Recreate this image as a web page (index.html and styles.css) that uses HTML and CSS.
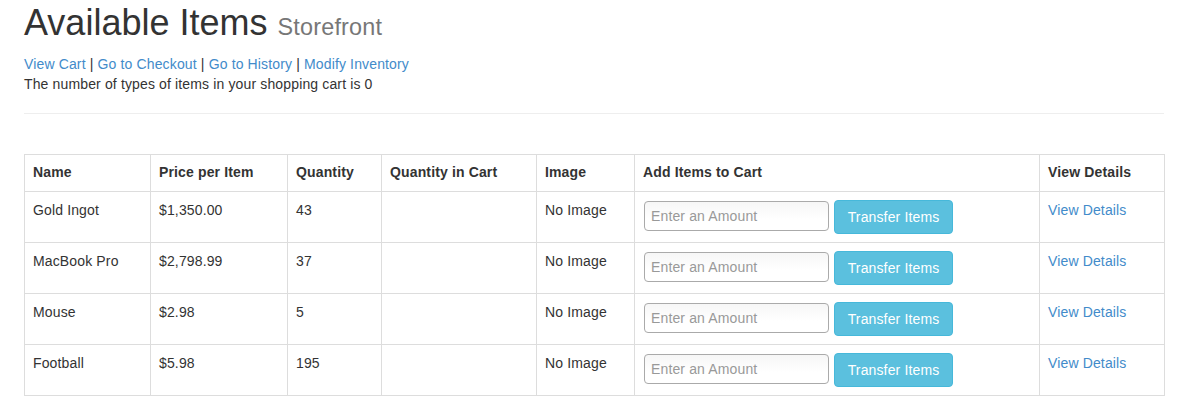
FILE: index.html
```html
<!DOCTYPE html>
<html>
<head>
<meta charset="utf-8">
<title>Available Items</title>
<link rel="stylesheet" href="styles.css">
</head>
<body>
<div class="page">
  <h1 class="title">Available Items <small class="subtitle">Storefront</small></h1>
  <div class="nav">
    <a href="#">View Cart</a> | <a href="#">Go to Checkout</a> | <a href="#">Go to History</a> | <a href="#">Modify Inventory</a>
  </div>
  <div class="count">The number of types of items in your shopping cart is 0</div>
  <hr class="divider">
  <table class="items">
    <colgroup>
      <col class="c-name"><col class="c-price"><col class="c-qty"><col class="c-cart"><col class="c-img"><col class="c-add"><col class="c-view">
    </colgroup>
    <thead>
      <tr><th>Name</th><th>Price per Item</th><th>Quantity</th><th>Quantity in Cart</th><th>Image</th><th>Add Items to Cart</th><th>View Details</th></tr>
    </thead>
    <tbody>
      <tr><td>Gold Ingot</td><td>$1,350.00</td><td>43</td><td></td><td>No Image</td>
        <td><div class="add"><input class="amount" type="text" placeholder="Enter an Amount"><button class="transfer">Transfer Items</button></div></td>
        <td><a href="#">View Details</a></td></tr>
      <tr><td>MacBook Pro</td><td>$2,798.99</td><td>37</td><td></td><td>No Image</td>
        <td><div class="add"><input class="amount" type="text" placeholder="Enter an Amount"><button class="transfer">Transfer Items</button></div></td>
        <td><a href="#">View Details</a></td></tr>
      <tr><td>Mouse</td><td>$2.98</td><td>5</td><td></td><td>No Image</td>
        <td><div class="add"><input class="amount" type="text" placeholder="Enter an Amount"><button class="transfer">Transfer Items</button></div></td>
        <td><a href="#">View Details</a></td></tr>
      <tr><td>Football</td><td>$5.98</td><td>195</td><td></td><td>No Image</td>
        <td><div class="add"><input class="amount" type="text" placeholder="Enter an Amount"><button class="transfer">Transfer Items</button></div></td>
        <td><a href="#">View Details</a></td></tr>
    </tbody>
  </table>
</div>
</body>
</html>
```

FILE: styles.css
```css
html, body {
  margin: 0;
  padding: 0;
  background: #fff;
}
body {
  font-family: "Liberation Sans", Arial, sans-serif;
  font-size: 14px;
  line-height: 20px;
  letter-spacing: 0.14px;
  color: #333;
}
a {
  color: #428bca;
  text-decoration: none;
}
.page {
  width: 1140px;
  margin-left: 24px;
}
.title {
  font-size: 36px;
  font-weight: 500;
  line-height: 1.1;
  letter-spacing: 0;
  margin: 3px 0 11px;
  color: #333;
}
.subtitle {
  font-size: 65%;
  font-weight: normal;
  line-height: 1;
  letter-spacing: 0.2px;
  color: #777;
}
.nav, .count {
  line-height: 20px;
}
.divider {
  border: 0;
  border-top: 1px solid #eee;
  margin: 19px 0 40px;
  height: 0;
}
.items {
  width: 1140px;
  table-layout: fixed;
  border-collapse: collapse;
  border: 1px solid #ddd;
}
.c-name { width: 126px; }
.c-price { width: 137px; }
.c-qty { width: 94px; }
.c-cart { width: 155px; }
.c-img { width: 98px; }
.c-add { width: 405px; }
.c-view { width: 125px; }
.items th, .items td {
  border: 1px solid #ddd;
  padding: 8px;
  text-align: left;
  vertical-align: top;
  line-height: 20px;
}
.items th {
  font-weight: bold;
  padding-top: 7px;
  padding-bottom: 9px;
}
.add {
  display: flex;
  align-items: flex-start;
  gap: 5px;
}
.amount {
  box-sizing: border-box;
  width: 185px;
  height: 30px;
  margin: 1px 0 0 1px;
  padding: 0 6px;
  border: 1px solid #aaa;
  border-radius: 4px;
  background: linear-gradient(#f6f6f6, #fff 60%);
  font-family: "Liberation Sans", Arial, sans-serif;
  font-size: 14px;
  letter-spacing: 0.14px;
  color: #555;
}
.amount::placeholder {
  color: #999;
}
.transfer {
  box-sizing: border-box;
  width: 119px;
  height: 34px;
  margin: 0;
  padding: 6px 0;
  border: 1px solid #46b8da;
  border-radius: 4px;
  background: #5bc0de;
  color: #fff;
  font-family: "Liberation Sans", Arial, sans-serif;
  font-size: 14px;
  letter-spacing: 0.14px;
  line-height: 20px;
  text-align: center;
  white-space: nowrap;
}
```
